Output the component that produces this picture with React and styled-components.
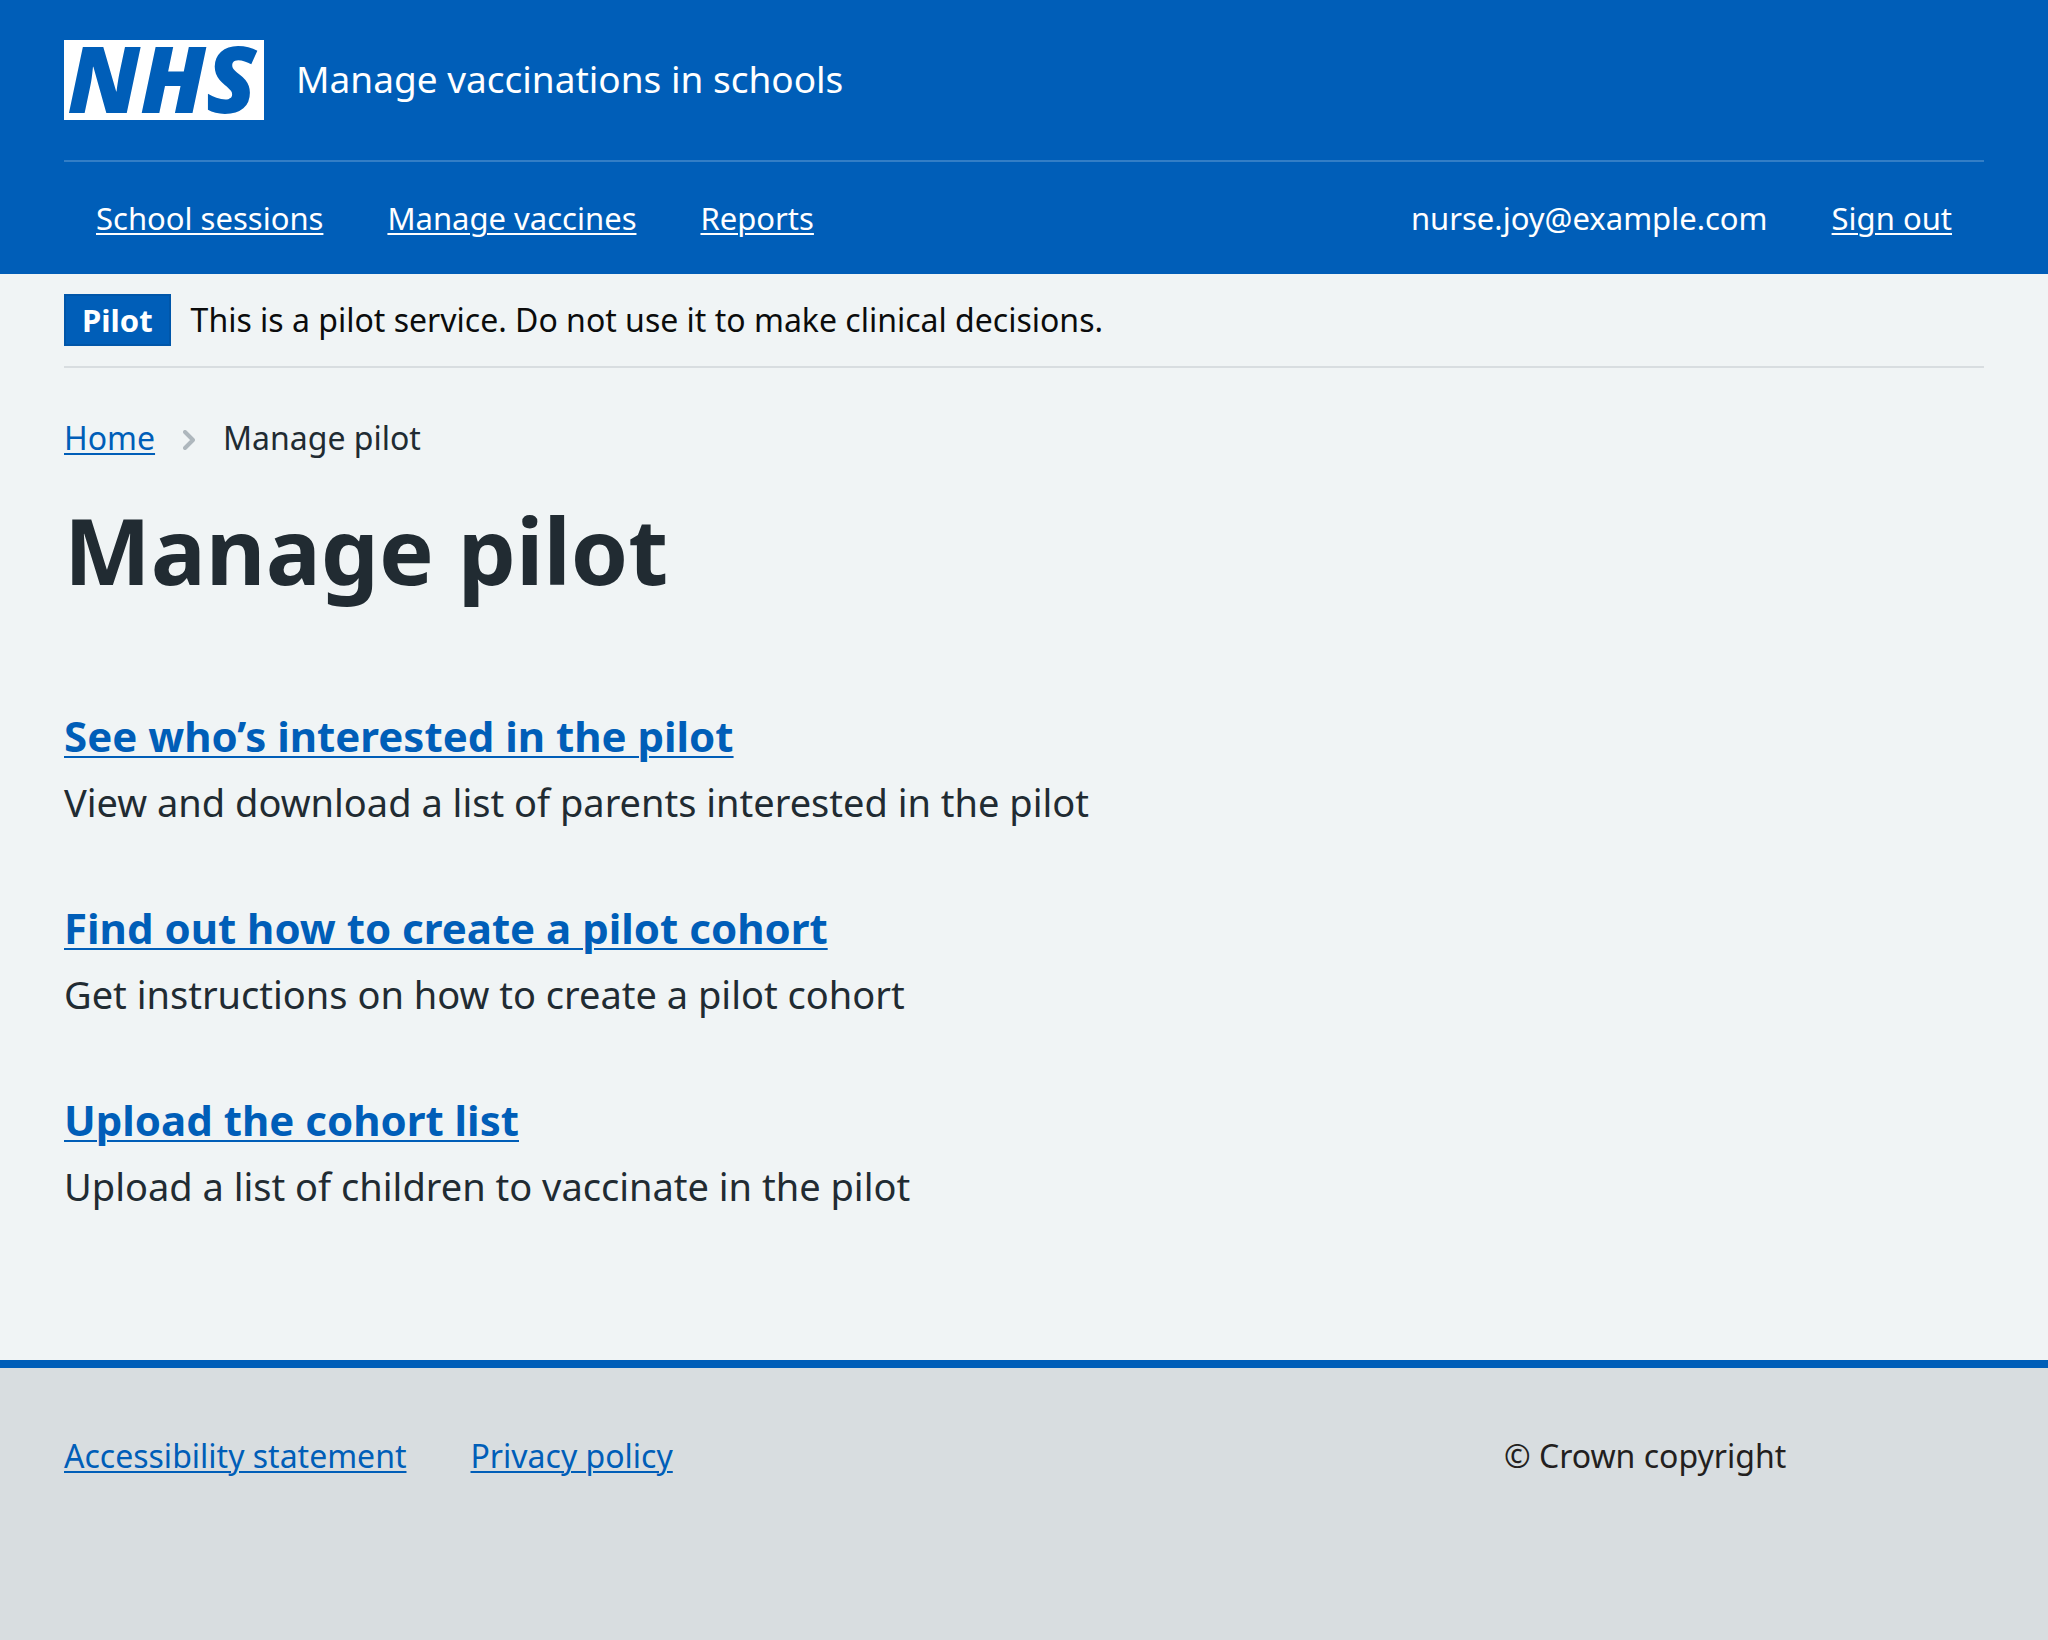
import React from "react";
import styled, { createGlobalStyle } from "styled-components";

const blue = "#005eb8";
const ink = "#212b32";
const paleGrey = "#d8dde0";

const GlobalStyle = createGlobalStyle`
  *, *::before, *::after { box-sizing: border-box; }
  body {
    margin: 0;
    background: ${paleGrey};
    color: ${ink};
    font-family: "Noto Sans", "Open Sans", Arial, sans-serif;
    font-size: 38px;
    line-height: 56px;
  }
`;

const Page = styled.div`
  display: flex;
  flex-direction: column;
  min-height: 100vh;
`;

const Link = styled.a`
  color: ${(p) => (p.$light ? "#fff" : blue)};
  text-decoration: underline;
  text-decoration-thickness: 2px;
  text-underline-offset: 3px;
`;

const Header = styled.header`
  padding: 0 64px;
  background: ${blue};
  color: #fff;
`;

const Brand = styled.a`
  display: flex;
  align-items: center;
  gap: 32px;
  padding: 40px 0;
  color: inherit;
  text-decoration: none;
`;

const Logo = styled.span`
  display: flex;
  justify-content: center;
  width: 200px;
  height: 80px;
  padding-right: 4px;
  background: #fff;
  color: ${blue};
  font-size: 92px;
  font-style: italic;
  font-weight: 900;
  line-height: 76px;
`;

const ServiceName = styled.span`
  padding-bottom: 2px;
  font-size: 37px;
`;

const Nav = styled.nav`
  display: flex;
  justify-content: space-between;
  padding: 32px;
  border-top: 2px solid rgba(255, 255, 255, 0.2);
  font-size: 31px;
  line-height: 48px;
`;

const LinkList = styled.ul`
  display: flex;
  flex-wrap: wrap;
  gap: 64px;
  margin: 0;
  padding: 0;
  list-style: none;
`;

const Main = styled.div`
  padding: 0 64px 146px;
  background: #f0f4f5;
`;

const PhaseBanner = styled.div`
  display: flex;
  align-items: center;
  gap: 20px;
  padding: 20px 0;
  border-bottom: 2px solid ${paleGrey};
  color: #0b0c0c;
  font-size: 32px;
  line-height: 48px;
`;

const Tag = styled.strong`
  padding: 0 16px;
  border: 2px solid #0056a9;
  background: ${blue};
  color: #fff;
  font-size: 31px;
  font-weight: 700;
`;

const Breadcrumb = styled.nav`
  display: flex;
  align-items: center;
  padding-top: 46px;
  font-size: 32px;
  line-height: 48px;
`;

const Chevron = styled.svg`
  width: 12px;
  height: 20px;
  margin: 4px 28px 0;
  fill: none;
  stroke: #aeb7bd;
  stroke-width: 4;
  stroke-linecap: round;
  stroke-linejoin: round;
`;

const Title = styled.h1`
  margin: 34px 0 104px;
  font-size: 92px;
  font-weight: 700;
  line-height: 108px;
`;

const TaskList = styled.ul`
  display: grid;
  gap: 70px;
  margin: 0;
  padding: 0;
  list-style: none;
`;

const TaskTitle = styled.h2`
  margin: 0 0 10px;
  font-size: 42px;
  font-weight: 700;
  line-height: 56px;

  ${Link} { text-underline-offset: 4px; }
`;

const TaskText = styled.p`
  margin: 0;
`;

const Footer = styled.footer`
  display: grid;
  flex: 1;
  grid-template-columns: 3fr 1fr;
  align-content: start;
  padding: 64px;
  border-top: 8px solid ${blue};
  background: ${paleGrey};
  font-size: 32px;
  line-height: 48px;
`;

const Copyright = styled.p`
  margin: 0;
  color: #231f20;
`;

const tasks = [
  ["See who’s interested in the pilot", "View and download a list of parents interested in the pilot"],
  ["Find out how to create a pilot cohort", "Get instructions on how to create a pilot cohort"],
  ["Upload the cohort list", "Upload a list of children to vaccinate in the pilot"],
];

export default function App() {
  return (
    <Page>
      <GlobalStyle />
      <Header>
        <Brand href="#">
          <Logo>NHS</Logo>
          <ServiceName>Manage vaccinations in schools</ServiceName>
        </Brand>
        <Nav>
          <LinkList>
            {["School sessions", "Manage vaccines", "Reports"].map((label) => (
              <li key={label}>
                <Link $light href="#">{label}</Link>
              </li>
            ))}
          </LinkList>
          <LinkList>
            <li>nurse.joy@example.com</li>
            <li>
              <Link $light href="#">Sign out</Link>
            </li>
          </LinkList>
        </Nav>
      </Header>
      <Main>
        <PhaseBanner>
          <Tag>Pilot</Tag>
          <span>This is a pilot service. Do not use it to make clinical decisions.</span>
        </PhaseBanner>
        <Breadcrumb>
          <Link href="#">Home</Link>
          <Chevron viewBox="0 0 12 20" aria-hidden="true">
            <path d="M2 2l8 8-8 8" />
          </Chevron>
          <span>Manage pilot</span>
        </Breadcrumb>
        <main>
          <Title>Manage pilot</Title>
          <TaskList>
            {tasks.map(([title, text]) => (
              <li key={title}>
                <TaskTitle>
                  <Link href="#">{title}</Link>
                </TaskTitle>
                <TaskText>{text}</TaskText>
              </li>
            ))}
          </TaskList>
        </main>
      </Main>
      <Footer>
        <LinkList>
          <li>
            <Link href="#">Accessibility statement</Link>
          </li>
          <li>
            <Link href="#">Privacy policy</Link>
          </li>
        </LinkList>
        <Copyright>© Crown copyright</Copyright>
      </Footer>
    </Page>
  );
}
